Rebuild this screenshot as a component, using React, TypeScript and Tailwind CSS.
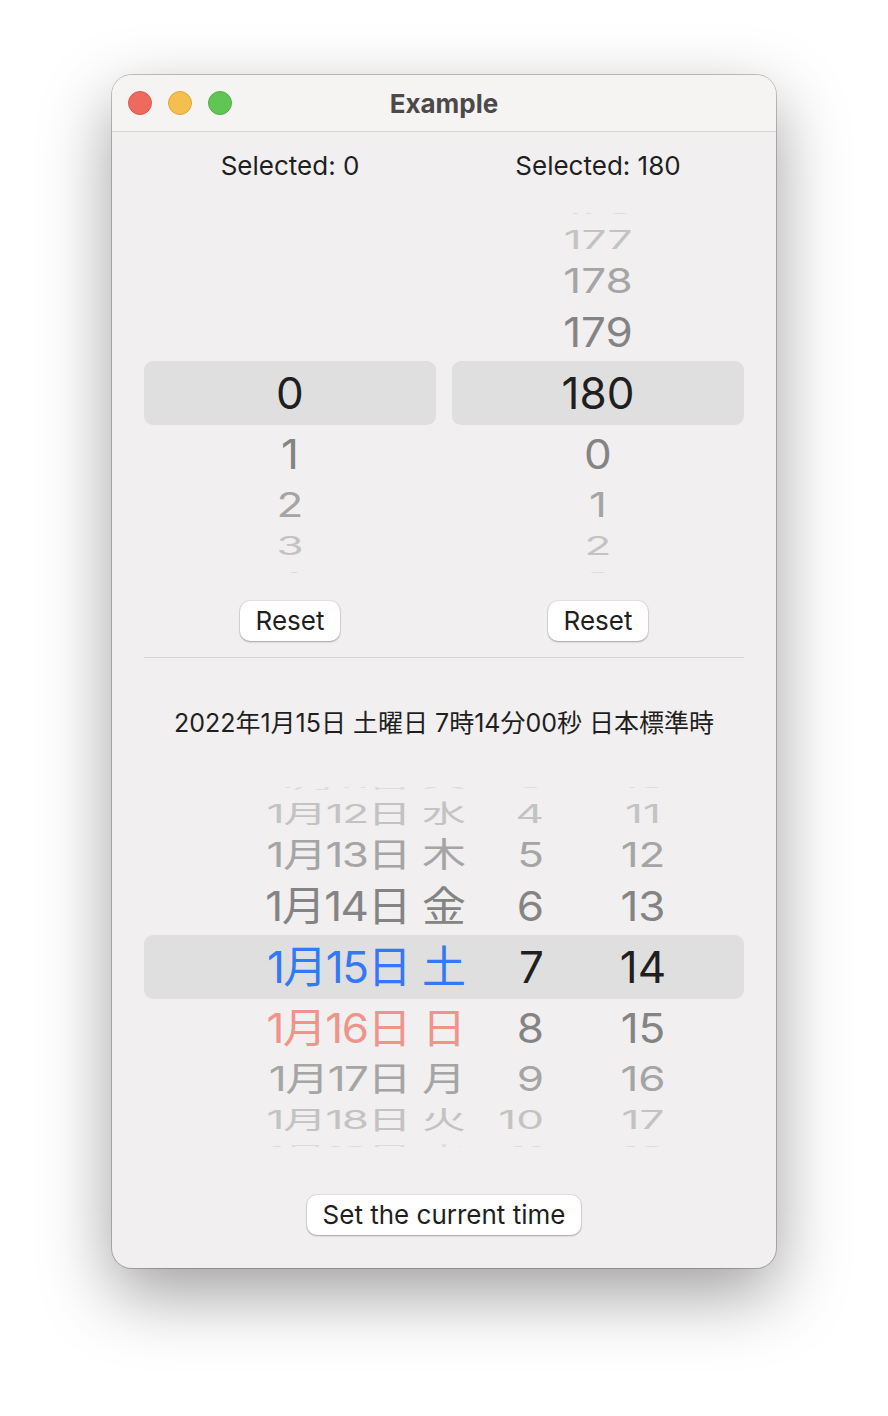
import React from 'react';

const font = "font-['Inter','Noto_Sans_CJK_JP',sans-serif]";

// wheel rows by distance from the selected row (index 0 = selected)
const wheel = [
  { h: 'h-[64px]', s: 'scale-y-100', c: 'text-[#1f1f1f]' },
  { h: 'h-[58px]', s: 'scale-y-[0.92]', c: 'text-[#848484]' },
  { h: 'h-[44px]', s: 'scale-y-[0.78]', c: 'text-[#a5a5a5]' },
  { h: 'h-[38px]', s: 'scale-y-[0.58]', c: 'text-[#c3c3c3]' },
  { h: 'h-[24px]', s: 'scale-y-[0.3]', c: 'text-[#dcdcdc]' },
];

function NumberWheel({ above, selected, below }: { above: string[]; selected: string; below: string[] }) {
  const rows: { v: string; d: number }[] = [
    ...above.map((v, i) => ({ v, d: above.length - i })),
    { v: selected, d: 0 },
    ...below.map((v, i) => ({ v, d: i + 1 })),
  ];
  return (
    <div className="h-[360px] overflow-hidden flex flex-col justify-center">
      {rows.map((r, i) => {
        const w = wheel[r.d];
        return (
          <div
            key={i}
            className={`shrink-0 ${w.h} flex items-center justify-center ${r.d === 0 ? 'bg-[#e0dfdf] rounded-[9px]' : ''}`}
          >
            <span className={`text-[44px] leading-none ${w.c} ${w.s}`}>{r.v}</span>
          </div>
        );
      })}
    </div>
  );
}

const dateRows = [
  { date: '1月11日', wd: '火', h: '3', m: '10', d: 4 },
  { date: '1月12日', wd: '水', h: '4', m: '11', d: 3 },
  { date: '1月13日', wd: '木', h: '5', m: '12', d: 2 },
  { date: '1月14日', wd: '金', h: '6', m: '13', d: 1 },
  { date: '1月15日', wd: '土', h: '7', m: '14', d: 0 },
  { date: '1月16日', wd: '日', h: '8', m: '15', d: 1, sunday: true },
  { date: '1月17日', wd: '月', h: '9', m: '16', d: 2 },
  { date: '1月18日', wd: '火', h: '10', m: '17', d: 3 },
  { date: '1月19日', wd: '水', h: '11', m: '18', d: 4 },
];

function DateWheel() {
  return (
    <div className="h-[360px] overflow-hidden flex flex-col justify-center">
      {dateRows.map((r, i) => {
        const w = wheel[r.d];
        const dayColor = r.d === 0 ? 'text-[#3478f6]' : r.sunday ? 'text-[#f0948b]' : w.c;
        return (
          <div
            key={i}
            className={`shrink-0 ${w.h} flex items-center ${r.d === 0 ? 'bg-[#e0dfdf] rounded-[9px]' : ''}`}
          >
            <div className={`flex items-center text-[44px] leading-none ${w.s}`}>
              <span className={`w-[266px] text-right tracking-[-1.5px] ${dayColor}`}>{r.date}</span>
              <span className={`ml-[12px] w-[59px] ${dayColor}`}>{r.wd}</span>
              <span className={`w-[63px] text-right ${w.c}`}>{r.h}</span>
              <span className={`w-[198px] text-center ${w.c}`}>{r.m}</span>
            </div>
          </div>
        );
      })}
    </div>
  );
}

function PushButton({ children }: { children: React.ReactNode }) {
  return (
    <button className="h-[40px] px-[16px] bg-white rounded-[10px] text-[26px] leading-none text-[#1f1f1f] shadow-[0_0_0_1px_rgba(0,0,0,0.06),0_1px_2px_rgba(0,0,0,0.28)]">
      {children}
    </button>
  );
}

export default function App() {
  return (
    <div className={`min-h-screen bg-white flex justify-center pt-[75px] ${font}`}>
      <div className="w-[664px] h-[1193px] rounded-[20px] bg-[#f1efef] overflow-hidden shadow-[0_0_0_1px_rgba(0,0,0,0.22),0_26px_70px_rgba(0,0,0,0.38)]">
        <header className="h-[57px] bg-[#f6f3f3] border-b border-[#d6d3d3] grid grid-cols-[1fr_auto_1fr] items-center">
          <div className="flex items-center gap-[16px] pl-[16px]">
            <span className="w-[24px] h-[24px] rounded-full bg-[#ee6a5f] border border-[#d9584e]" />
            <span className="w-[24px] h-[24px] rounded-full bg-[#f5bf4f] border border-[#dca63e]" />
            <span className="w-[24px] h-[24px] rounded-full bg-[#61c554] border border-[#4fae43]" />
          </div>
          <h1 className="text-[26px] font-bold text-[#4b4949]">Example</h1>
          <div />
        </header>

        <main className="px-[32px]">
          <div className="grid grid-cols-2 gap-[16px] pt-[18px]">
            <div className="flex flex-col items-center">
              <p className="text-[26px] leading-[32px] text-[#1f1f1f]">Selected: 0</p>
              <div className="self-stretch mt-[31px]">
                <NumberWheel above={['', '', '', '']} selected="0" below={['1', '2', '3', '4']} />
              </div>
              <div className="mt-[28px]">
                <PushButton>Reset</PushButton>
              </div>
            </div>
            <div className="flex flex-col items-center">
              <p className="text-[26px] leading-[32px] text-[#1f1f1f]">Selected: 180</p>
              <div className="self-stretch mt-[31px]">
                <NumberWheel above={['176', '177', '178', '179']} selected="180" below={['0', '1', '2', '3']} />
              </div>
              <div className="mt-[28px]">
                <PushButton>Reset</PushButton>
              </div>
            </div>
          </div>

          <div className="mt-[16px] h-px bg-[#d8d5d5]" />

          <p className="mt-[49px] text-center text-[25px] leading-[32px] text-[#1f1f1f]">
            2022年1月15日 土曜日 7時14分00秒 日本標準時
          </p>

          <div className="mt-[48px]">
            <DateWheel />
          </div>

          <div className="mt-[48px] flex justify-center">
            <PushButton>Set the current time</PushButton>
          </div>
        </main>
      </div>
    </div>
  );
}
